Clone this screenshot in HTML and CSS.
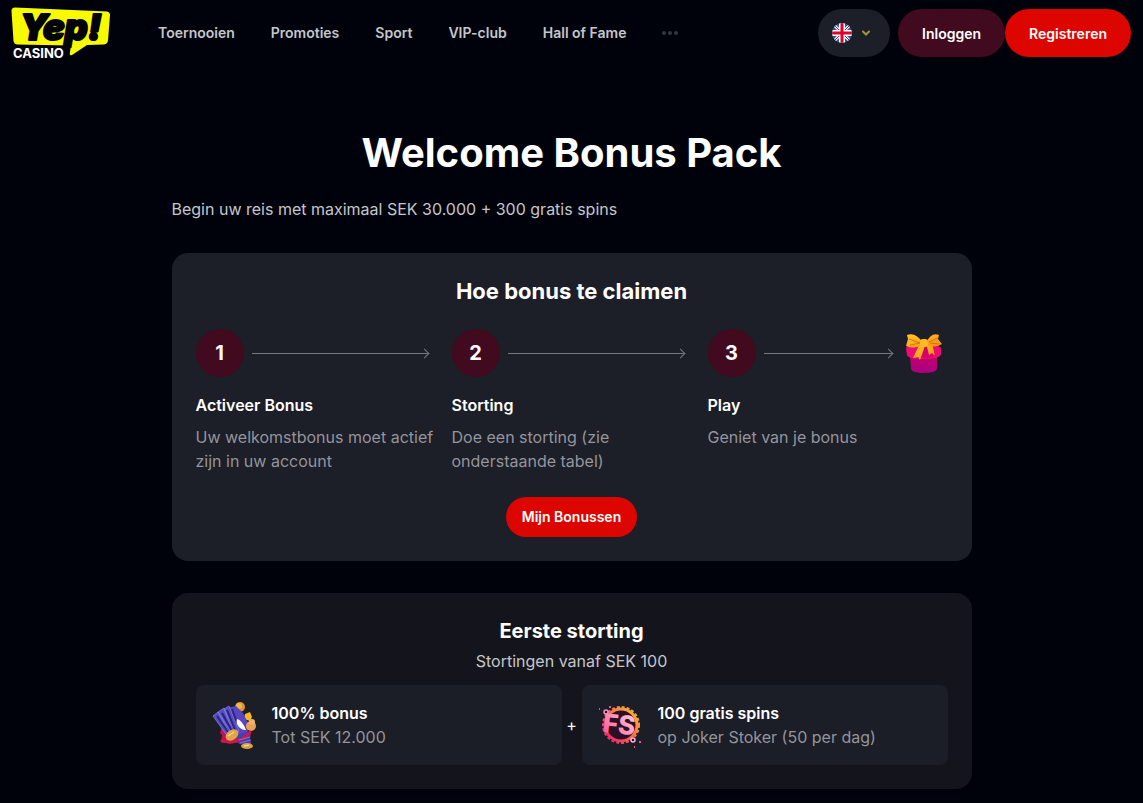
FILE: index.html
```html
<!DOCTYPE html>
<html lang="nl">
  <head>
    <meta charset="UTF-8" />
    <meta name="viewport" content="width=device-width, initial-scale=1.0" />
    <title>Welcome Bonus Pack - Yep! Casino</title>
    <link rel="stylesheet" href="styles.css">
  </head>
  <body>
    <header class="header">
      <a class="logo" href="#" aria-label="Yep! Casino">
        <svg width="100" height="54" viewBox="0 0 100 54">
          <path fill="#f8fb00" d="M4 1.500 96 5.500Q99 6 99 9L97 34.500Q96.500 38 93 38.500L76 39 61 49Q58 50 59 46L60 39.500 6 38.500Q3 38 2.500 35L.5 5Q.5 1.500 4 1.500Z" />
          <text class="logo-name" x="9" y="34">Yep!</text>
          <text class="logo-sub" x="2" y="52">CASINO</text>
        </svg>
      </a>
      <nav class="nav">
        <a href="#">Toernooien</a>
        <a href="#">Promoties</a>
        <a href="#">Sport</a>
        <a href="#">VIP-club</a>
        <a href="#">Hall of Fame</a>
        <button class="more" type="button" aria-label="Meer">
          <svg width="16" height="4" viewBox="0 0 16 4" fill="#34363f">
            <circle cx="2" cy="2" r="2" />
            <circle cx="8" cy="2" r="2" />
            <circle cx="14" cy="2" r="2" />
          </svg>
        </button>
      </nav>
      <div class="actions">
        <button class="lang" type="button" aria-label="Taal">
          <svg width="20" height="20" viewBox="0 0 20 20">
            <clipPath id="flag"><circle cx="10" cy="10" r="10" /></clipPath>
            <g clip-path="url(#flag)">
              <path fill="#1664ae" d="M0 0h20v20H0z" />
              <path stroke="#fff" stroke-width="3" d="M0 0 20 20M20 0 0 20" />
              <path stroke="#e0002d" stroke-width="1" d="M0 0 20 20M20 0 0 20" />
              <path stroke="#fff" stroke-width="6" d="M10 0v20M0 10h20" />
              <path stroke="#e0002d" stroke-width="3" d="M10 0v20M0 10h20" />
            </g>
          </svg>
          <svg width="8" height="6" viewBox="0 0 8 6" fill="none" stroke="#a8923c" stroke-width="2" stroke-linecap="round">
            <path d="M1 1.500 4 4.500 7 1.500" />
          </svg>
        </button>
        <button class="btn btn-login" type="button">Inloggen</button>
        <button class="btn btn-register" type="button">Registreren</button>
      </div>
    </header>

    <main class="container">
      <h1>Welcome Bonus Pack</h1>
      <p class="intro">Begin uw reis met maximaal SEK 30.000 + 300 gratis spins</p>

      <section class="card claim">
        <h2>Hoe bonus te claimen</h2>
        <div class="steps">
          <div class="step">
            <div class="step-top">
              <span class="step-number">1</span>
              <span class="arrow"></span>
            </div>
            <h3>Activeer Bonus</h3>
            <p>Uw welkomstbonus moet actief zijn in uw account</p>
          </div>
          <div class="step">
            <div class="step-top">
              <span class="step-number">2</span>
              <span class="arrow"></span>
            </div>
            <h3>Storting</h3>
            <p>Doe een storting (zie onderstaande tabel)</p>
          </div>
          <div class="step">
            <div class="step-top">
              <span class="step-number">3</span>
              <span class="arrow"></span>
              <svg class="gift" width="48" height="48" viewBox="0 0 48 48">
                <defs>
                  <linearGradient id="box" x1="0" y1="0" x2="0" y2="1">
                    <stop offset="0" stop-color="#c90068" />
                    <stop offset="1" stop-color="#a90083" />
                  </linearGradient>
                  <linearGradient id="ribbon" x1="0" y1="0" x2="1" y2="1">
                    <stop offset="0" stop-color="#ffc928" />
                    <stop offset="1" stop-color="#f58a12" />
                  </linearGradient>
                </defs>
                <path fill="url(#box)" d="M10 24h27v16q-1 4-13 4t-13-4z" />
                <path fill="#f00b72" d="M6 20q0-3 4-3h26q5 0 5 3v5q-1 5-17 5T7 26z" />
                <path fill="#d70067" d="m18 17 13 0 5 9-9 4-8-3z" />
                <path fill="url(#ribbon)" d="m20 14-7 15 5-1 2 3 5-14zM26 14l3 12 3-2 3 3-3-13z" />
                <path fill="url(#ribbon)" d="M23 14Q16 3 7 6l1 4-2 7q9 4 17-2zM26 14Q31 3 39 6l-1 4 4 5q-8 5-16 0z" />
                <path fill="none" stroke="#df7008" d="m9 10 11 4M10 16l10-2M29 13l9-4M30 14l9 1" />
                <rect x="20" y="10" width="8" height="8" rx="3" fill="#ffbc21" />
              </svg>
            </div>
            <h3>Play</h3>
            <p>Geniet van je bonus</p>
          </div>
        </div>
        <a class="btn-bonus" href="#">Mijn Bonussen</a>
      </section>

      <section class="card deposit">
        <h2>Eerste storting</h2>
        <p class="deposit-from">Stortingen vanaf SEK 100</p>
        <div class="rewards">
          <div class="reward">
            <svg width="48" height="48" viewBox="0 0 48 48">
              <circle cx="28" cy="6" r="5" fill="#dc9332" />
              <circle cx="27" cy="5" r="3" fill="#f1b64c" />
              <path fill="#f3bb20" d="m33 13 5-2 2 5-2 4-6-2z" />
              <path fill="#c0124e" d="m10 26-2 6 2 2-1 7 9 2 20-4 1-7-20 4z" />
              <path fill="#5945c4" d="M15 7 24 5l7 7 6 12-3 14-14-8-9-10z" />
              <path fill="#4a3fae" d="m22 34 14-3 4 14-13-2z" />
              <path fill="#554cc8" stroke="#8a84e0" stroke-width=".7" d="m1 15 5-4 14 21-4 4zM6 11l6-4 11 24-4 4zM12 8l5-3 10 25-5 4z" />
              <path fill="none" stroke="#292777" stroke-width="2" d="m5 15 11 16M10 12l10 18M15 9l8 20M20 8l5 14" />
              <path fill="#fff" d="M25 18q5 1 9 11-6 0-9-6-1-3 0-5z" />
              <circle cx="39" cy="25" r="5" fill="#e9a153" />
              <circle cx="40" cy="21" r="3" fill="#f0b368" />
              <path fill="none" stroke="#cf174e" stroke-width="3" stroke-linecap="round" d="M10 40q20 3 28-9" />
              <path fill="none" stroke="#8a81dc" stroke-width=".8" d="m27 39 11-3M28 42l11-3" />
              <ellipse cx="20" cy="34" rx="7" ry="5" fill="#e4a546" transform="rotate(-35 20 34)" />
              <ellipse cx="35" cy="45" rx="6" ry="3" fill="#dda03e" />
              <path fill="none" stroke="#fff0a0" d="m16 35 6-4M32 45l5-1" />
            </svg>
            <div>
              <h3>100% bonus</h3>
              <p>Tot SEK 12.000</p>
            </div>
          </div>
          <span class="plus">+</span>
          <div class="reward">
            <svg width="48" height="48" viewBox="0 0 48 48">
              <defs>
                <linearGradient id="ring" x1="0" y1="1" x2="1" y2="0">
                  <stop offset="0" stop-color="#ef1773" />
                  <stop offset="1" stop-color="#ffbd2d" />
                </linearGradient>
                <linearGradient id="letters" x1="0" y1="1" x2="1" y2="0">
                  <stop offset="0" stop-color="#ff4c92" />
                  <stop offset="1" stop-color="#ffd7e4" />
                </linearGradient>
              </defs>
              <circle cx="23" cy="24" r="16" fill="#2b0f22" stroke="url(#ring)" stroke-width="3" />
              <circle cx="23" cy="24" r="18" fill="none" stroke="url(#ring)" stroke-width="2" stroke-dasharray="3 2" />
              <text class="fs" x="5" y="33" transform="rotate(6 24 24)">FS</text>
              <circle cx="8" cy="11" r="2" fill="#2b0f22" stroke="#ff8cc0" stroke-width="1.500" />
              <circle cx="35" cy="39" r="2" fill="#2b0f22" stroke="#ffb0d5" stroke-width="1.500" />
              <path fill="#e94ca5" d="M1 7h1v2H1zM11 5h2v2h-2zM41 40h2v2h-2zM36 45h1v2h-1z" />
            </svg>
            <div>
              <h3>100 gratis spins</h3>
              <p>op Joker Stoker (50 per dag)</p>
            </div>
          </div>
        </div>
      </section>
    </main>
  </body>
</html>
```
FILE: styles.css
```css
* {
  box-sizing: border-box;
}
body {
  margin: 0;
  background-color: #00020b;
  color: #fff;
  font-family: Inter, "Liberation Sans", sans-serif;
  font-size: 16px;
  line-height: 24px;
}
h1,
h2,
h3,
p {
  margin: 0;
}
a {
  color: inherit;
  text-decoration: none;
}
button {
  border: none;
  padding: 0;
  font-family: inherit;
  cursor: pointer;
}
svg {
  display: block;
  flex-shrink: 0;
  overflow: visible;
}
.header {
  display: flex;
  align-items: center;
  padding: 6px 12px 6px 11px;
}
.logo-name {
  font-size: 36px;
  font-weight: 900;
  font-style: italic;
  fill: #03030a;
  stroke: #03030a;
  stroke-width: 2px;
  stroke-linejoin: round;
}
.logo-sub {
  font-size: 13px;
  font-weight: 700;
  fill: #fff;
}
.nav {
  display: flex;
  align-items: center;
  gap: 36px;
  margin-left: 47px;
  color: #c5c6ca;
  font-size: 14px;
  font-weight: 600;
}
.more {
  background: none;
}
.actions {
  display: flex;
  margin-left: auto;
}
.lang {
  display: flex;
  align-items: center;
  gap: 10px;
  width: 72px;
  height: 48px;
  margin-right: 8px;
  padding-left: 14px;
  border-radius: 24px;
  background-color: #1c1e28;
}
.btn {
  height: 48px;
  padding: 0 24px;
  border-radius: 24px;
  color: #fff;
  font-size: 14px;
  font-weight: 600;
}
.btn-login {
  background-color: #420a1e;
}
.btn-register {
  background-color: #dc0500;
}
.container {
  max-width: 800px;
  margin: 0 auto;
  padding: 63px 0 14px;
}
h1 {
  font-size: 40px;
  line-height: 48px;
  text-align: center;
}
.intro {
  margin: 20px 0 32px;
  color: #c5c6ca;
}
.card {
  padding: 24px;
  border-radius: 16px;
  text-align: center;
}
.card h2 {
  font-weight: 700;
  line-height: 28px;
}
.card h3 {
  font-size: 16px;
  font-weight: 600;
}
.claim {
  margin-bottom: 32px;
  background-color: #1c1e28;
}
.claim h2 {
  font-size: 22px;
}
.steps {
  display: grid;
  grid-template-columns: repeat(3, 1fr);
  gap: 16px;
  margin: 24px 0;
  text-align: left;
}
.step-top {
  display: flex;
  align-items: center;
  margin-bottom: 16px;
}
.step h3 {
  margin-bottom: 8px;
}
.step p,
.reward p {
  color: #94959b;
}
.step-number {
  width: 48px;
  line-height: 48px;
  border-radius: 50%;
  background-color: #420a1e;
  font-size: 20px;
  font-weight: 700;
  text-align: center;
}
.arrow {
  position: relative;
  flex: 1;
  height: 1px;
  margin: 0 7px 0 8px;
  background-color: #777981;
}
.arrow::after {
  content: "";
  position: absolute;
  top: -3px;
  right: 1px;
  width: 6px;
  height: 6px;
  border-top: 1px solid #777981;
  border-right: 1px solid #777981;
  transform: rotate(45deg);
}
.btn-bonus {
  display: inline-block;
  padding: 0 16px;
  border-radius: 20px;
  background-color: #dc0500;
  font-size: 14px;
  font-weight: 600;
  line-height: 40px;
  vertical-align: top;
}
.deposit {
  background-color: #14151c;
}
.deposit h2 {
  font-size: 20px;
}
.deposit-from {
  margin: 4px 0 12px;
  color: #c5c6ca;
}
.rewards {
  display: flex;
  align-items: center;
}
.reward {
  display: flex;
  flex: 1;
  align-items: center;
  gap: 12px;
  padding: 16px;
  border-radius: 8px;
  background-color: #1b1d27;
  text-align: left;
}
.plus {
  width: 20px;
  font-size: 16px;
}
.fs {
  font-size: 26px;
  font-weight: 800;
  fill: url(#letters);
}
```
